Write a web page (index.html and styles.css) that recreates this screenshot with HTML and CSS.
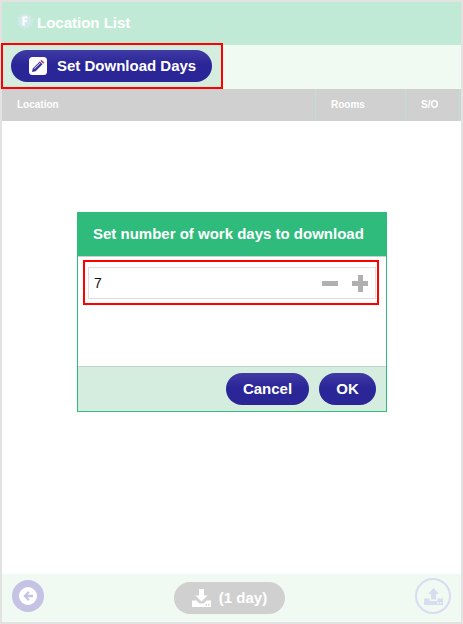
FILE: index.html
```html
<!DOCTYPE html>
<html lang="en">
<head>
<meta charset="utf-8">
<title>Location List</title>
<link rel="stylesheet" href="styles.css">
</head>
<body>
<div class="app">
  <header class="title-bar">
    <svg class="logo" width="16" height="16" viewBox="0 0 16 16"><circle cx="8" cy="8" r="6.500" fill="#d3e9ee"/><circle cx="8" cy="8" r="7.300" fill="none" stroke="#d3e9ee" stroke-width="1.400" stroke-dasharray="1.800 1.800"/><path d="M5.500 3.500h5v1.800H7.600v1.800h2.500v1.700H7.600V12.500H5.500z" fill="#fff"/></svg>
    <h1 class="title">Location List</h1>
  </header>
  <div class="toolbar">
    <div class="toolbar-tint">
      <button class="pill pill-main">
        <svg class="edit-icon" width="18" height="18" viewBox="0 0 18 18"><rect width="18" height="18" rx="3.500" fill="#fff"/><path d="M3 15l.8-3.600 6.900-6.900 2.800 2.800-6.900 6.900z" fill="#3a3096"/><path d="M5 11.600l5.900-5.900.5.500-5.900 5.900z" fill="#fff"/><path d="M11.300 3.900l1.200-1.100 2.800 2.800-1.200 1.200z" fill="#c2417a"/></svg>
        <span class="pill-label">Set Download Days</span>
      </button>
    </div>
  </div>
  <div class="table-head">
    <div class="col col-location">Location</div>
    <div class="col col-rooms">Rooms</div>
    <div class="col col-so">S/O</div>
  </div>
  <main class="table-body"></main>
  <footer class="footer">
    <button class="back" aria-label="Back">
      <svg width="20" height="20" viewBox="0 0 20 20"><circle cx="10" cy="10" r="9" fill="#fff"/><path d="M15 8.700H9.500l2.200-2.200-1.500-1.500L5.300 10l4.900 5 1.500-1.500-2.200-2.200H15z" fill="#c5c2e3"/></svg>
    </button>
    <button class="pill pill-disabled">
      <svg width="19" height="18" viewBox="0 0 19 18"><path d="M7 0h5v6.500h3.500L9.500 12.500 3.500 6.500H7z" fill="#fff"/><path d="M0 11.500h4.500l3 3h4l3-3H19V18H0z" fill="#fff"/><rect x="13.500" y="15" width="1.500" height="1.500" fill="#d0d0d0"/><rect x="16" y="15" width="1.500" height="1.500" fill="#d0d0d0"/></svg>
      (1 day)
    </button>
    <button class="upload" aria-label="Upload">
      <svg width="19" height="17" viewBox="0 0 19 17"><path d="M9.500 0l5.500 6h-3v5.500H7V6H4z" fill="#d9dcef"/><path d="M0 10.500h5.500v2.500h8v-2.500H19V17H0z" fill="#d9dcef"/><rect x="13" y="14" width="1.500" height="1.500" fill="#f0faf3"/><rect x="15.800" y="14" width="1.500" height="1.500" fill="#f0faf3"/></svg>
    </button>
  </footer>

  <div class="dialog">
    <div class="dialog-head">Set number of work days to download</div>
    <div class="dialog-body">
      <div class="stepper">
        <span class="stepper-value">7</span>
        <span class="stepper-btn minus"></span>
        <span class="stepper-btn plus"></span>
      </div>
    </div>
    <div class="dialog-foot">
      <button class="pill pill-cancel">Cancel</button>
      <button class="pill pill-ok">OK</button>
    </div>
  </div>

  <div class="mark mark-toolbar"></div>
  <div class="mark mark-input"></div>
</div>
</body>
</html>
```
FILE: styles.css
```css
* { box-sizing: border-box; }
html, body { margin: 0; padding: 0; }
body { width: 463px; height: 624px; overflow: hidden; background: #fff; font-family: "Liberation Sans", Arial, sans-serif; }
.app { position: relative; width: 463px; height: 624px; border: 2px solid #e2e2e2; display: flex; flex-direction: column; background: #fff; }
.title-bar { height: 43px; flex: none; background: #c0ead6; display: flex; align-items: center; padding: 0 0 2px 15px; gap: 4px; }
.logo { flex: none; margin-top: -3px; }
.title { margin: 0; font-size: 15px; font-weight: 700; color: #fff; }
.toolbar { height: 44px; flex: none; background: #f0faf3; }
.toolbar-tint { width: 220px; height: 100%; background: #d5eddf; padding: 5px 0 0 9px; }
.pill { border: 0; border-radius: 17px; height: 32px; color: #fff; font: 700 15px "Liberation Sans", Arial, sans-serif; background: linear-gradient(#403aa4, #2a2698 45%, #2a2696); display: flex; align-items: center; justify-content: center; padding: 0; cursor: pointer; }
.pill-main { width: 201px; gap: 10px; justify-content: flex-start; padding-left: 18px; }
.pill-label { padding-bottom: 1px; }
.edit-icon { flex: none; }
.table-head { height: 32px; flex: none; background: #d0d0d0; display: flex; color: #fff; font-size: 10px; font-weight: 700; }
.col { display: flex; align-items: center; height: 100%; padding-bottom: 1px; }
.col-location { width: 313px; padding-left: 15px; }
.col-rooms { width: 90px; border-left: 1px solid #c0e0d2; padding-left: 15px; }
.col-so { width: 55px; border-left: 1px solid #c0e0d2; border-right: 1px solid #c0e0d2; padding-left: 15px; }
.table-body { flex: 1; background: #fff; }
.footer { height: 48px; flex: none; background: #f0faf3; position: relative; display: flex; align-items: center; justify-content: center; }
.back { position: absolute; left: 10px; top: 6px; width: 32px; height: 32px; border: 0; padding: 0; border-radius: 50%; background: #c5c2e3; display: flex; align-items: center; justify-content: center; }
.pill-disabled { width: 111px; gap: 8px; background: #d0d0d0; margin-right: 4px; padding-bottom: 1px; }
.upload { position: absolute; left: 413px; top: 4px; width: 36px; height: 36px; border: 2px solid #d9dcef; padding: 0; border-radius: 50%; background: transparent; display: flex; align-items: center; justify-content: center; }
.dialog { position: absolute; left: 75px; top: 210px; width: 310px; height: 200px; background: #fff; border: 1px solid #2ebb7b; display: flex; flex-direction: column; }
.dialog-head { height: 44px; margin: -1px -1px 0; flex: none; background: #2ebb7b; color: #fff; font-size: 15px; font-weight: 700; display: flex; align-items: center; padding-left: 16px; padding-bottom: 1px; }
.dialog-body { flex: 1; border-top: 1px solid #cfcfcf; padding: 10px 10px 0; }
.stepper { width: 288px; height: 32px; border: 1px solid #dedede; display: flex; align-items: center; padding: 0 7px 0 5px; font-size: 14px; color: #111; }
.stepper-value { flex: 1; padding-bottom: 1px; }
.stepper-btn { position: relative; width: 16px; height: 5px; background: #b0b0b0; flex: none; }
.minus { margin-right: 14px; }
.plus::after { content: ""; position: absolute; left: 5.500px; top: -6px; width: 5px; height: 17px; background: #b0b0b0; }
.dialog-foot { height: 45px; flex: none; background: #d5eddf; border-top: 1px solid #c4d4cb; display: flex; align-items: center; justify-content: flex-end; gap: 10px; padding: 0 10px 1px 0; }
.pill-cancel { width: 83px; }
.pill-ok { width: 57px; }
.mark { position: absolute; border: 2px solid #f00; pointer-events: none; }
.mark-toolbar { left: -1px; top: 41px; width: 222px; height: 46px; }
.mark-input { left: 81px; top: 258px; width: 296px; height: 45px; }
```
